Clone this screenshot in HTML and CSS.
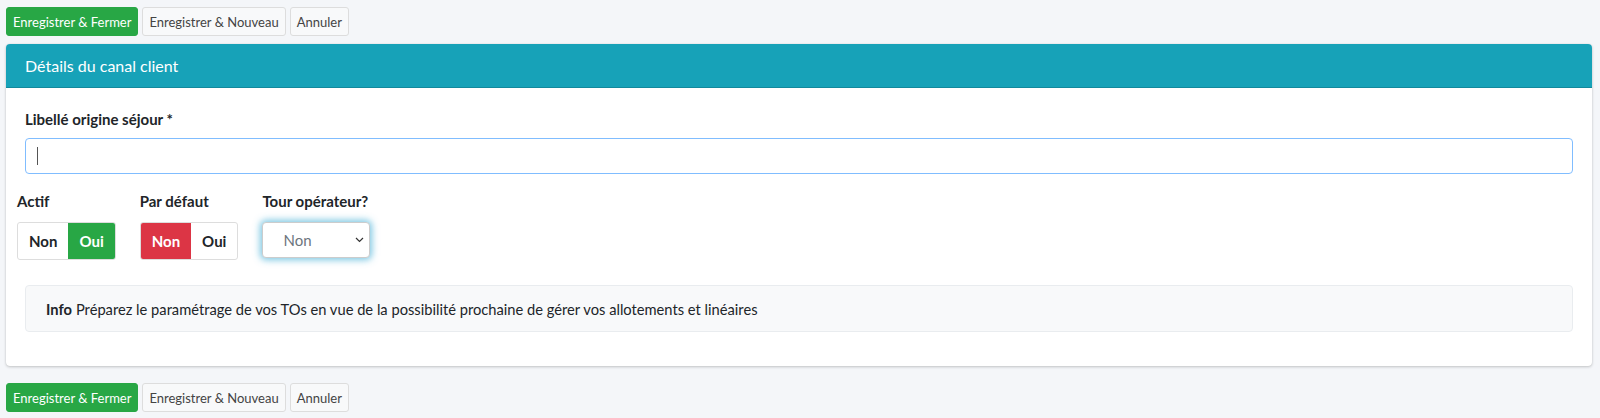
FILE: index.html
```html
<!DOCTYPE html>
<html lang="fr">
<head>
  <meta charset="UTF-8">
  <title>Détails du canal client</title>
  <link rel="stylesheet" href="styles.css">
</head>
<body>

  <div class="actions">
    <button class="btn btn-success">Enregistrer &amp; Fermer</button>
    <button class="btn btn-default">Enregistrer &amp; Nouveau</button>
    <button class="btn btn-default">Annuler</button>
  </div>

  <div class="card">
    <div class="card-header">Détails du canal client</div>
    <div class="card-body">
      <label class="field-label" for="libelle">Libellé origine séjour *</label>
      <div class="input-wrap">
        <input type="text" id="libelle" class="form-control">
        <span class="caret"></span>
      </div>

      <div class="switch-row">
        <div class="switch-col">
          <div class="col-label">Actif</div>
          <div class="btn-group">
            <span class="opt">Non</span>
            <span class="opt on-green">Oui</span>
          </div>
        </div>
        <div class="switch-col">
          <div class="col-label">Par défaut</div>
          <div class="btn-group">
            <span class="opt on-red">Non</span>
            <span class="opt">Oui</span>
          </div>
        </div>
        <div class="switch-col">
          <div class="col-label">Tour opérateur?</div>
          <div class="select-wrap">
            <select class="select">
              <option>Non</option>
              <option>Oui</option>
            </select>
            <svg class="chevron" width="9" height="6" viewBox="0 0 9 6"><path d="M1 1l3.5 3.5L8 1" fill="none" stroke="#333" stroke-width="1.2"/></svg>
          </div>
        </div>
      </div>

      <div class="info-box">
        <b>Info</b> Préparez le paramétrage de vos TOs en vue de la possibilité prochaine de gérer vos allotements et linéaires
      </div>
    </div>
  </div>

  <div class="actions">
    <button class="btn btn-success">Enregistrer &amp; Fermer</button>
    <button class="btn btn-default">Enregistrer &amp; Nouveau</button>
    <button class="btn btn-default">Annuler</button>
  </div>

</body>
</html>
```

FILE: styles.css
```css
body {
  margin: 0;
  padding: 7px 8px 0 6px;
  background-color: #f4f6f9;
  font-family: Lato, "Noto Sans", sans-serif;
  color: #212529;
}
.actions {
  display: flex;
  gap: 4px;
}
.btn {
  height: 29px;
  padding: 0 6px;
  font-family: inherit;
  font-size: 13px;
  border-radius: 3px;
  border: 1px solid #ddd;
  cursor: pointer;
}
.btn-success {
  background-color: #28a745;
  border-color: #28a745;
  color: #fff;
}
.btn-default {
  background-color: #f8f9fa;
  color: #444;
}
.card {
  margin: 8px 0 17px;
  background: #fff;
  border-radius: 4px;
  box-shadow: 0 0 1px rgba(0,0,0,.125), 0 1px 3px rgba(0,0,0,.2);
  overflow: hidden;
}
.card-header {
  height: 43px;
  display: flex;
  align-items: center;
  padding: 0 19px;
  background-color: #17a2b8;
  border-bottom: 1px solid #12899c;
  color: #fff;
  font-size: 16px;
}
.card-body {
  padding: 22px 19px 34px;
}
.field-label {
  display: block;
  font-weight: bold;
  font-size: 15px;
  margin-bottom: 10px;
}
.input-wrap {
  position: relative;
}
.form-control {
  display: block;
  box-sizing: border-box;
  width: 100%;
  height: 36px;
  border: 1px solid #80bdff;
  border-radius: 4px;
  outline: none;
}
.caret {
  position: absolute;
  left: 12px;
  top: 9px;
  width: 1px;
  height: 18px;
  background: #555;
}
.switch-row {
  display: flex;
  gap: 24px;
  margin: 18px 0 0 -8px;
}
.col-label {
  font-weight: bold;
  font-size: 15px;
  height: 20px;
  margin-bottom: 10px;
}
.btn-group {
  display: flex;
  height: 36px;
  border: 1px solid #ddd;
  border-radius: 3px;
  overflow: hidden;
}
.opt {
  display: flex;
  align-items: center;
  padding: 0 11px;
  font-weight: bold;
  font-size: 15px;
  color: #212529;
}
.on-green {
  background-color: #28a745;
  color: #fff;
}
.on-red {
  background-color: #dc3545;
  color: #fff;
}
.select-wrap {
  position: relative;
  width: 108px;
}
.select {
  appearance: none;
  width: 108px;
  height: 36px;
  padding: 0 20px;
  font-family: inherit;
  font-size: 15px;
  color: #6c757d;
  background: #fff;
  border: 1px solid #ccc;
  border-radius: 4px;
  box-shadow: 0 0 7px 2px rgba(70, 175, 215, .7);
  outline: none;
}
.chevron {
  position: absolute;
  right: 6px;
  top: 15px;
  pointer-events: none;
}
.info-box {
  margin-top: 25px;
  height: 45px;
  display: flex;
  align-items: center;
  gap: 4px;
  padding: 0 20px;
  background-color: #f8f9fa;
  border: 1px solid #e9ecef;
  border-radius: 4px;
  font-size: 14.7px;
}
```
